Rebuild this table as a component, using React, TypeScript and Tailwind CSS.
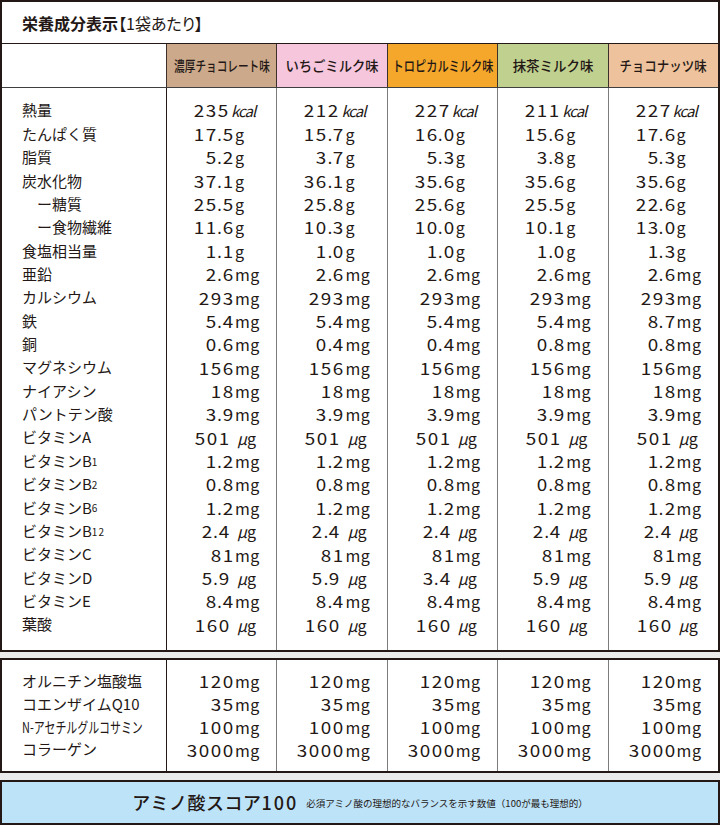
const ink = 'text-[#231815]'

const flavors = [
  { name: '濃厚チョコレート味', bg: 'bg-[#cba98a]', fit: 'scale-x-[0.76]' },
  { name: 'いちごミルク味', bg: 'bg-[#f6c6dd]', fit: 'scale-x-[0.95]' },
  { name: 'トロピカルミルク味', bg: 'bg-[#f4a72b]', fit: 'scale-x-[0.8]' },
  { name: '抹茶ミルク味', bg: 'bg-[#c0d08f]', fit: 'scale-x-[0.96]' },
  { name: 'チョコナッツ味', bg: 'bg-[#eec29c]', fit: 'scale-x-[0.89]' },
]

const labels: { text: React.ReactNode; indent?: boolean }[] = [
  { text: '熱量' },
  { text: 'たんぱく質' },
  { text: '脂質' },
  { text: '炭水化物' },
  { text: 'ー糖質', indent: true },
  { text: 'ー食物繊維', indent: true },
  { text: '食塩相当量' },
  { text: '亜鉛' },
  { text: 'カルシウム' },
  { text: '鉄' },
  { text: '銅' },
  { text: 'マグネシウム' },
  { text: 'ナイアシン' },
  { text: 'パントテン酸' },
  { text: 'ビタミンA' },
  { text: <>ビタミンB<span className="text-[10px]">1</span></> },
  { text: <>ビタミンB<span className="text-[10px]">2</span></> },
  { text: <>ビタミンB<span className="text-[10px]">6</span></> },
  { text: <>ビタミンB<span className="text-[10px] tracking-[1px]">12</span></> },
  { text: 'ビタミンC' },
  { text: 'ビタミンD' },
  { text: 'ビタミンE' },
  { text: '葉酸' },
]

// rows 8.. are almost the same for every flavor
const tail = (zinc: string, iron: string, copper: string, vitD: string) => [
  zinc, '293mg', iron, copper, '156mg', '18mg', '3.9mg', '501μg', '1.2mg', '0.8mg', '1.2mg', '2.4μg', '81mg', vitD, '8.4mg', '160μg',
]

const values: string[][] = [
  ['235kcal', '17.5g', '5.2g', '37.1g', '25.5g', '11.6g', '1.1g', ...tail('2.6mg', '5.4mg', '0.6mg', '5.9μg')],
  ['212kcal', '15.7g', '3.7g', '36.1g', '25.8g', '10.3g', '1.0g', ...tail('2.6mg', '5.4mg', '0.4mg', '5.9μg')],
  ['227kcal', '16.0g', '5.3g', '35.6g', '25.6g', '10.0g', '1.0g', ...tail('2.6mg', '5.4mg', '0.4mg', '3.4μg')],
  ['211kcal', '15.6g', '3.8g', '35.6g', '25.5g', '10.1g', '1.0g', ...tail('2.6mg', '5.4mg', '0.8mg', '5.9μg')],
  ['227kcal', '17.6g', '5.3g', '35.6g', '22.6g', '13.0g', '1.3g', ...tail('2.6mg', '8.7mg', '0.8mg', '5.9μg')],
]

const extraLabels: React.ReactNode[] = [
  'オルニチン塩酸塩',
  'コエンザイムQ10',
  <span className="inline-block origin-left scale-x-[0.73] whitespace-nowrap">N-アセチルグルコサミン</span>,
  'コラーゲン',
]
const extraValues = ['120mg', '35mg', '100mg', '3000mg']

const Num = ({ n }: { n: string }) => (
  <span className="text-[16px]">
    {n.split('').map((c, i) =>
      c === '.' ? (
        <span key={i} className="inline-block w-[5px] text-center">.</span>
      ) : (
        <span key={i} className="inline-block w-[12px] text-center scale-x-[1.18]">{c}</span>
      )
    )}
  </span>
)

const Val = ({ v }: { v: string }) => {
  const m = v.match(/^([\d.]+)(.*)$/)
  const num = m ? m[1] : v
  const unit = m ? m[2] : ''
  let box = 'w-[67px]'
  let u: React.ReactNode = <span className="ml-[1px]">g</span>
  if (unit === 'mg') u = <span className="ml-[1px] tracking-[0.5px]">mg</span>
  if (unit === 'μg') {
    box = 'w-[63px]'
    u = <span className="ml-[7px]"><i>μ</i>g</span>
  }
  if (unit === 'kcal') {
    box = 'w-[62px]'
    u = <span className="ml-[2px] italic text-[15px] tracking-[-1px]">kcal</span>
  }
  return (
    <div className="flex items-baseline text-[16px] leading-[20px] whitespace-nowrap">
      <span className={`${box} shrink-0 flex justify-end items-baseline`}>
        <Num n={num} />
      </span>
      {u}
    </div>
  )
}

const grid = 'grid grid-cols-[164px_repeat(5,minmax(0,1fr))]'

export default function App() {
  return (
    <div className={`w-[720px] h-[825px] bg-[#ebebeb] ${ink} font-['Noto_Sans_CJK_JP',sans-serif] overflow-hidden`}>
      {/* main table */}
      <div className="bg-white border-2 border-[#231815]">
        <div className="h-[42px] border-b-[1.5px] border-[#231815] flex items-center pl-[20px] text-[16px]">
          <span className="font-bold">栄養成分表示</span>
          <span className="[font-feature-settings:'palt']">【1袋あたり】</span>
        </div>
        <div className={`${grid} h-[44px] border-b-[1.5px] border-[#3f3f3f]`}>
          <div />
          {flavors.map((f) => (
            <div key={f.name} className={`${f.bg} border-l-[1.5px] border-[#3b302a] flex items-center justify-center`}>
              <span className={`inline-block whitespace-nowrap text-[14px] font-medium ${f.fit}`}>{f.name}</span>
            </div>
          ))}
        </div>
        <div className={grid}>
          <div className="pt-[11px] pb-[13.7px] pl-[20px] text-[15px]">
            {labels.map((l, i) => (
              <div key={i} className={`h-[23.36px] flex items-center whitespace-nowrap ${l.indent ? 'pl-[15px]' : ''}`}>
                {l.text}
              </div>
            ))}
          </div>
          {values.map((col, ci) => (
            <div
              key={ci}
              className={`pt-[11px] pb-[13.7px] border-l-[1.5px] ${ci === 0 ? 'border-[#231815]' : 'border-[#7c7c7c]'}`}
            >
              {col.map((v, i) => (
                <div key={i} className="h-[23.36px] flex items-center">
                  <Val v={v} />
                </div>
              ))}
            </div>
          ))}
        </div>
      </div>

      {/* functional ingredients */}
      <div className={`mt-[6px] bg-white border-2 border-[#231815] ${grid}`}>
        <div className="pt-[10px] pb-[9.8px] pl-[20px] text-[15px]">
          {extraLabels.map((l, i) => (
            <div key={i} className="h-[22.8px] flex items-center whitespace-nowrap">{l}</div>
          ))}
        </div>
        {[0, 1, 2, 3, 4].map((ci) => (
          <div
            key={ci}
            className={`pt-[10px] pb-[9.8px] border-l-[1.5px] ${ci === 0 ? 'border-[#231815]' : 'border-[#7c7c7c]'}`}
          >
            {extraValues.map((v) => (
              <div key={v} className="h-[22.8px] flex items-center">
                <Val v={v} />
              </div>
            ))}
          </div>
        ))}
      </div>

      {/* amino score */}
      <div className="mt-[7px] h-[45px] bg-[#bde3f8] border-2 border-[#231815] flex items-center justify-center gap-[8px]">
        <span className="text-[18px] font-medium tracking-[0.5px]">
          アミノ酸スコア<span className="tracking-[2px]">100</span>
        </span>
        <span className="text-[9.5px] mt-[1px]">必須アミノ酸の理想的なバランスを示す数値（100が最も理想的）</span>
      </div>
    </div>
  )
}
